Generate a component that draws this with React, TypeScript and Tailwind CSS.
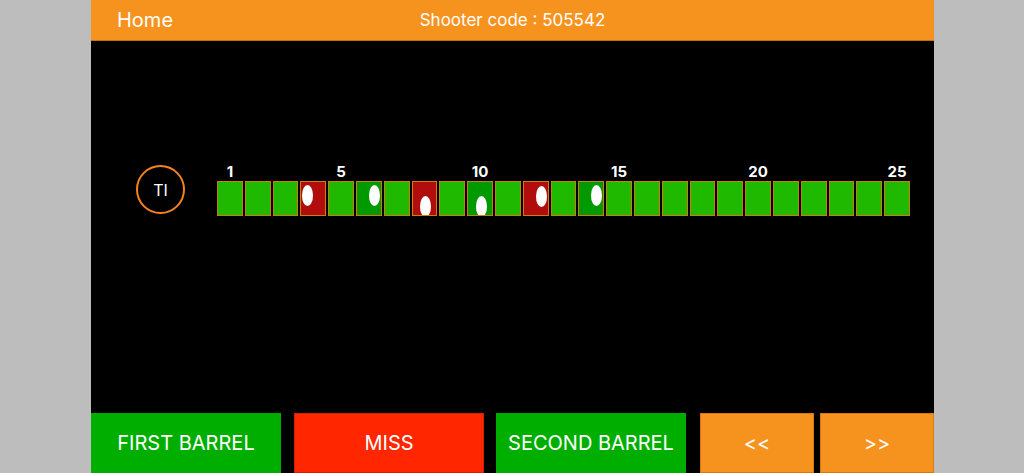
import React from 'react';

type Shot = { left: number; top: number };

type Cell = {
  kind: 'hit' | 'first' | 'second' | 'miss';
  shot?: Shot;
};

// 25 targets: light green = not shot yet, dark green = hit, red = miss
const cells: Cell[] = Array.from({ length: 25 }, () => ({ kind: 'hit' as const }));
cells[3] = { kind: 'miss', shot: { left: 2, top: 4 } };
cells[5] = { kind: 'second', shot: { left: 13, top: 4 } };
cells[7] = { kind: 'miss', shot: { left: 8, top: 15 } };
cells[9] = { kind: 'second', shot: { left: 9, top: 15 } };
cells[11] = { kind: 'miss', shot: { left: 13, top: 5 } };
cells[13] = { kind: 'second', shot: { left: 13, top: 4 } };

const labels: Record<number, string> = { 1: '1', 5: '5', 10: '10', 15: '15', 20: '20', 25: '25' };

const cellColor = (kind: Cell['kind']) => {
  if (kind === 'miss') return 'bg-[#b10d0d]';
  if (kind === 'second') return 'bg-[#009a00]';
  return 'bg-[#1fb900]';
};

export default function App() {
  return (
    <div className="w-[1024px] h-[473px] bg-[#bdbdbd] overflow-hidden" style={{ fontFamily: 'Inter, "Liberation Sans", sans-serif' }}>
      <div className="ml-[91px] w-[843px] h-full flex flex-col bg-black">
        {/* Header */}
        <div className="h-[41px] bg-[#f6921e] border-b border-[#c8700e] relative flex items-center text-white">
          <span className="pl-[26px] text-[20px] leading-none">Home</span>
          <span className="absolute left-0 right-0 text-center text-[17px] leading-none pointer-events-none">
            Shooter code : 505542
          </span>
        </div>

        {/* Score strip */}
        <div className="flex-1 flex flex-col">
          <div className="mt-[122px] flex items-start">
            <div className="ml-[45px] mt-[2px] w-[49px] h-[49px] rounded-full border-2 border-[#f5821e] flex items-center justify-center text-white text-[16px]">
              TI
            </div>
            <div className="ml-[32px] w-[693px]">
              <div className="grid grid-cols-[repeat(25,minmax(0,1fr))] gap-x-[2px] h-[18px]">
                {cells.map((_, i) => (
                  <div key={i} className="text-center text-white font-bold text-[15px] leading-[17px] whitespace-nowrap">
                    {labels[i + 1] ?? ''}
                  </div>
                ))}
              </div>
              <div className="grid grid-cols-[repeat(25,minmax(0,1fr))] gap-x-[2px]">
                {cells.map((c, i) => (
                  <div key={i} className={`relative h-[35px] overflow-hidden border border-[#cc7f0e] ${cellColor(c.kind)}`}>
                    {c.shot && (
                      <div
                        className="absolute w-[11px] h-[21px] rounded-[50%] bg-white"
                        style={{ left: c.shot.left - 1, top: c.shot.top - 1 }}
                      />
                    )}
                  </div>
                ))}
              </div>
            </div>
          </div>
        </div>

        {/* Buttons */}
        <div className="h-[60px] flex text-white text-[20px]">
          <button className="w-[190px] bg-[#00ae00] flex items-center justify-center">FIRST BARREL</button>
          <button className="ml-[13px] w-[190px] bg-[#ff2600] border border-[#d81e00] flex items-center justify-center">MISS</button>
          <button className="ml-[12px] w-[190px] bg-[#00ae00] flex items-center justify-center">SECOND BARREL</button>
          <button className="ml-[14px] w-[114px] bg-[#f6921e] border border-[#d9780e] flex items-center justify-center">&lt;&lt;</button>
          <button className="ml-[6px] w-[114px] bg-[#f6921e] border border-[#d9780e] flex items-center justify-center">&gt;&gt;</button>
        </div>
      </div>
    </div>
  );
}
